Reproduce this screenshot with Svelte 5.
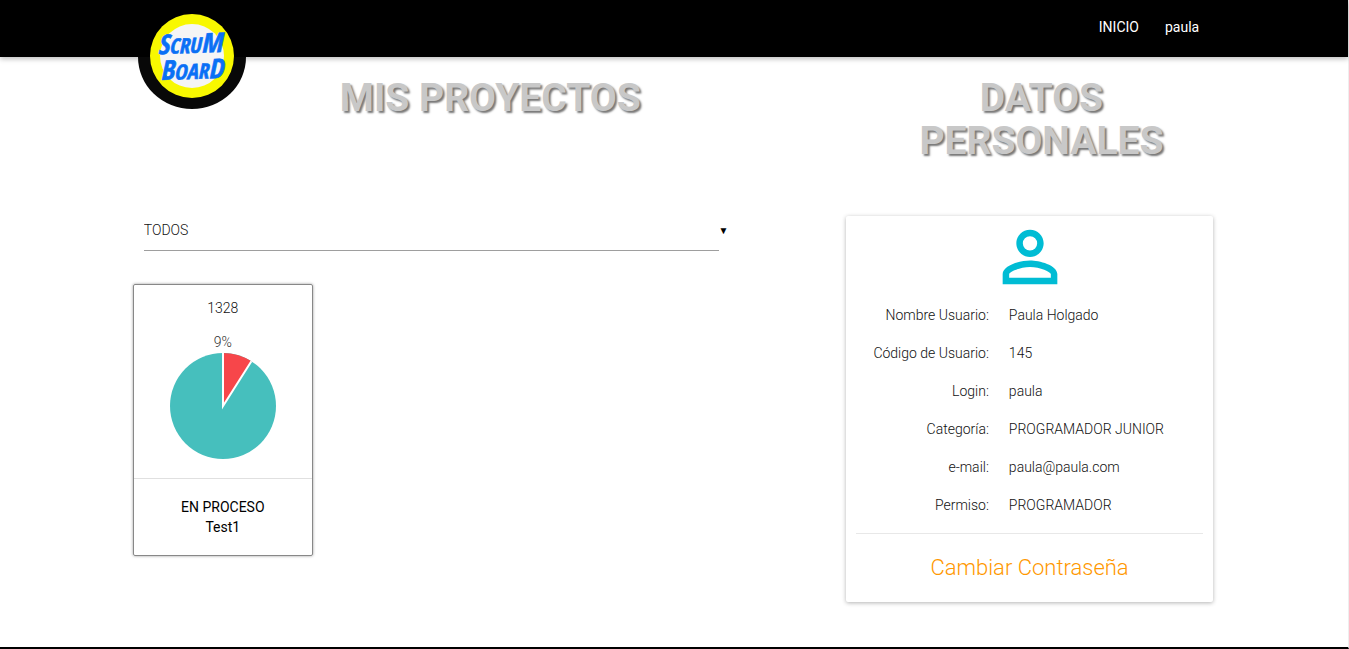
<script>
  const user = [
    ['Nombre Usuario:', 'Paula Holgado'],
    ['Código de Usuario:', '145'],
    ['Login:', 'paula'],
    ['Categoría:', 'PROGRAMADOR JUNIOR'],
    ['e-mail:', 'paula@paula.com'],
    ['Permiso:', 'PROGRAMADOR']
  ];

  const percent = 9;
  const angle = (percent / 100) * 2 * Math.PI;
  const endX = 54 + 53 * Math.sin(angle);
  const endY = 54 - 53 * Math.cos(angle);
</script>

<div class="page">
  <header>
    <div class="bar">
      <a class="logo" href="#inicio" aria-label="Scrum Board">
        <svg width="108" height="108" viewBox="0 0 108 108">
          <path d="M0 56A54 52 0 0 0 108 56Z" fill="#080808" />
          <circle cx="54" cy="55" r="42" fill="#f8f800" />
          <circle cx="54" cy="55" r="32" fill="#f5f5f5" />
          <g class="brand" text-anchor="middle" transform="rotate(-2 54 54)">
            <text x="52" y="52"><tspan class="big">S</tspan>CRU<tspan class="big">M</tspan></text>
            <text x="53" y="78"><tspan class="big">B</tspan>OAR<tspan class="big">D</tspan></text>
          </g>
        </svg>
      </a>
      <nav>
        <a href="#inicio">INICIO</a>
        <a href="#usuario">paula</a>
      </nav>
    </div>
  </header>

  <main>
    <div class="titles">
      <h1>MIS PROYECTOS</h1>
      <h1>DATOS PERSONALES</h1>
    </div>

    <div class="columns">
      <section class="projects">
        <div class="filter">
          <select aria-label="Estado">
            <option>TODOS</option>
          </select>
          <span class="caret" aria-hidden="true">▼</span>
        </div>

        <article class="project">
          <div class="chart">
            <p>1328</p>
            <p class="percent">{percent}%</p>
            <svg width="108" height="108" viewBox="0 0 108 108">
              <circle cx="54" cy="54" r="53" fill="#46bfbd" />
              <path
                d="M54 54V1A53 53 0 0 1 {endX} {endY}Z"
                fill="#f7464a"
              />
              <path d="M54 0V54L{endX} {endY}" fill="none" stroke="#fff" stroke-width="2" />
            </svg>
          </div>
          <div class="status">
            <p>EN PROCESO</p>
            <p>Test1</p>
          </div>
        </article>
      </section>

      <section class="profile">
        <svg class="avatar" width="82" height="82" viewBox="0 0 24 24" fill="#00bcd4">
          <path
            d="M12 5.900a2.100 2.100 0 1 1 0 4.200 2.100 2.100 0 0 1 0-4.200m0 9c2.970 0 6.100 1.460 6.100 2.100v1.100H5.900V17c0-.64 3.130-2.100 6.100-2.100M12 4C9.790 4 8 5.790 8 8s1.790 4 4 4 4-1.790 4-4-1.790-4-4-4zm0 9c-2.670 0-8 1.340-8 4v3h16v-3c0-2.660-5.330-4-8-4z"
          />
        </svg>
        <dl>
          {#each user as [label, value]}
            <dt>{label}</dt>
            <dd>{value}</dd>
          {/each}
        </dl>
        <div class="action"><a href="#password">Cambiar Contraseña</a></div>
      </section>
    </div>
  </main>
</div>

<style>
  :global(body) {
    margin: 0;
    background: #fff;
  }

  .page {
    box-sizing: border-box;
    min-height: 100vh;
    border-right: 1px solid #eee;
    border-bottom: 2px solid #000;
    font: 300 14px/20px Roboto, sans-serif;
    color: #111;
  }

  a {
    text-decoration: none;
  }

  p,
  h1,
  dl,
  dd {
    margin: 0;
  }

  header {
    background: #000;
    box-shadow: 0 2px 5px rgba(0, 0, 0, 0.26);
  }

  .bar,
  main {
    width: 80%;
    margin: 0 auto;
  }

  .bar {
    position: relative;
    display: flex;
    justify-content: flex-end;
    height: 57px;
  }

  .logo {
    position: absolute;
    top: 1px;
    left: 3px;
  }

  .logo svg,
  .avatar {
    display: block;
  }

  .brand {
    font: italic 700 21px 'Liberation Sans Narrow', 'Open Sans Condensed', 'Roboto Condensed', sans-serif;
    fill: #0a70f5;
    stroke: #0a70f5;
    stroke-width: 0.6px;
  }

  .big {
    font-size: 27px;
  }

  nav {
    display: flex;
    gap: 26px;
    padding-right: 14px;
    line-height: 54px;
  }

  nav a {
    color: #fff;
    font-weight: 400;
  }

  .titles {
    display: grid;
    grid-template-columns: 2fr 1fr;
    margin: 0 -12px;
    padding: 20px 0 53px;
  }

  h1 {
    padding: 0 12px;
    font-size: 39px;
    font-weight: 700;
    line-height: 43px;
    text-align: center;
    color: #c8c8c8;
    text-shadow: 2px 2px 2px #777;
  }

  .columns {
    display: grid;
    grid-template-columns: minmax(0, 1fr) 34%;
    align-items: start;
    margin-left: -2px;
    padding-bottom: 43px;
  }

  .filter {
    display: flex;
    width: 82%;
    margin-bottom: 33px;
    padding-left: 11px;
  }

  select {
    flex: 1;
    height: 35px;
    padding: 0 0 6px;
    border: 0;
    border-bottom: 1px solid #9e9e9e;
    border-radius: 0;
    appearance: none;
    background: transparent;
    font: inherit;
    color: inherit;
  }

  .caret {
    font-size: 10px;
    line-height: 30px;
    color: #000;
  }

  .project {
    width: 178px;
    border: 1px solid #888;
    border-radius: 2px;
    box-shadow: 0 0 3px rgba(0, 0, 0, 0.4);
    text-align: center;
  }

  .chart {
    padding: 13px 0;
    border-bottom: 1px solid #e0e0e0;
  }

  .percent {
    margin-top: 14px;
    color: #333;
  }

  .status {
    padding: 18px 0;
    font-weight: 400;
    color: #000;
  }

  .profile {
    padding: 0 10px;
    border-radius: 2px;
    box-shadow: 0 1px 4px rgba(0, 0, 0, 0.3);
  }

  .avatar {
    margin: 0 auto;
  }

  dl {
    display: grid;
    grid-template-columns: 133px 1fr;
    gap: 18px 20px;
    padding: 7px 0 18px;
  }

  dt {
    text-align: right;
  }

  .action {
    padding: 20px 0;
    border-top: 1px solid #e8e8e8;
    font-size: 22px;
    line-height: 28px;
    text-align: center;
  }

  .action a {
    color: #ff9800;
  }
</style>
